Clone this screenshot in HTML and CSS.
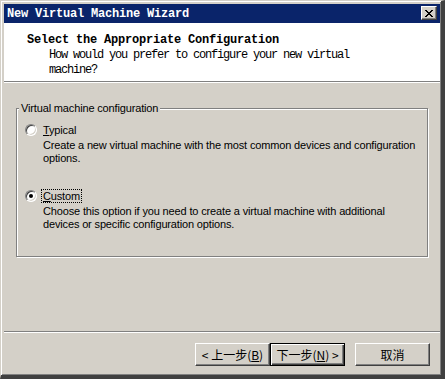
FILE: index.html
```html
<!DOCTYPE html>
<html lang="en">
<head>
  <meta charset="UTF-8">
  <title>New Virtual Machine Wizard</title>
  <link rel="stylesheet" href="styles.css">
</head>
<body>
  <div class="window">
    <div class="titlebar">
      <span class="title">New Virtual Machine Wizard</span>
      <button class="close">
        <svg width="8" height="7" viewBox="0 0 8 7" shape-rendering="crispEdges">
          <path fill="#000" d="M0 0h2v1H0z M6 0h2v1H6z M1 1h2v1H1z M5 1h2v1H5z M2 2h4v1H2z M3 3h2v1H3z M2 4h4v1H2z M1 5h2v1H1z M5 5h2v1H5z M0 6h2v1H0z M6 6h2v1H6z"/>
        </svg>
      </button>
    </div>

    <div class="header">
      <div class="head-title">Select the Appropriate Configuration</div>
      <div class="head-sub">How would you prefer to configure your new virtual machine?</div>
    </div>

    <div class="content">
      <div class="group">
        <div class="legend">Virtual machine configuration</div>

        <!-- Typical -->
        <div class="option">
          <div class="option-row">
            <span class="radio"></span>
            <span class="label"><u>T</u>ypical</span>
          </div>
          <div class="desc">Create a new virtual machine with the most common devices and configuration options.</div>
        </div>

        <!-- Custom -->
        <div class="option second">
          <div class="option-row">
            <span class="radio checked"></span>
            <span class="label focus"><u>C</u>ustom</span>
          </div>
          <div class="desc">Choose this option if you need to create a virtual machine with additional devices or specific configuration options.</div>
        </div>
      </div>
    </div>

    <div class="footer">
      <button class="btn">&lt; 上一步(<u>B</u>)</button>
      <button class="btn default">下一步(<u>N</u>) &gt;</button>
      <button class="btn cancel">取消</button>
    </div>
  </div>
</body>
</html>
```

FILE: styles.css
```css
body {
  margin: 0;
  font-family: "Liberation Sans", Arial, sans-serif;
  font-size: 11px;
  color: #000;
}

.window {
  width: 445px;
  height: 379px;
  box-sizing: border-box;
  background: #d4d0c8;
  border-style: solid;
  border-width: 1px 4px 4px 1px;
  border-color: #d4d0c8 #404040 #404040 #d4d0c8;
  box-shadow: inset 1px 1px #fff, inset -1px -1px #808080;
  padding: 3px 1px 1px 3px;
  display: flex;
  flex-direction: column;
}

/* title bar */
.titlebar {
  height: 19px;
  flex-shrink: 0;
  background: #0a246a;
  display: flex;
  align-items: center;
  justify-content: space-between;
  padding: 0 3px;
}

.title {
  color: #fff;
  font: bold 12px "Liberation Mono", monospace;
  letter-spacing: -0.2px;
}

.close {
  width: 16px;
  height: 14px;
  box-sizing: border-box;
  padding: 0;
  margin-top: -1px;
  background: #d4d0c8;
  border: 1px solid;
  border-color: #fff #404040 #404040 #fff;
  box-shadow: inset -1px -1px #808080;
  display: flex;
  align-items: center;
  justify-content: center;
}

.close svg {
  display: block;
}

/* white header */
.header {
  height: 59px;
  flex-shrink: 0;
  box-sizing: border-box;
  background: #fff;
  border-bottom: 1px solid #808080;
  box-shadow: 0 1px #fff;
  padding: 10px 0 0 23px;
}

.head-title {
  font: bold 12px/15px "Liberation Mono", monospace;
  letter-spacing: -0.2px;
}

.head-sub {
  font: 12px/15px "Liberation Mono", monospace;
  letter-spacing: -1.2px;
  padding-left: 22px;
  width: 310px;
}

/* group box */
.content {
  flex: 1;
  padding: 26px 0 0 12px;
}

.group {
  position: relative;
  width: 412px;
  box-sizing: border-box;
  border: 1px solid #808080;
  box-shadow: 1px 1px #fff, inset 1px 1px #fff;
  padding: 14px 8px 25px 8px;
  letter-spacing: -0.15px;
}

.legend {
  position: absolute;
  left: 2px;
  top: -7px;
  line-height: 13px;
  padding: 0 2px;
  background: #d4d0c8;
}

.option.second {
  margin-top: 24px;
}

.option-row {
  display: flex;
  align-items: center;
  height: 14px;
}

.radio {
  position: relative;
  width: 12px;
  height: 12px;
  box-sizing: border-box;
  border-radius: 50%;
  background: #fff;
  border: 1px solid;
  border-color: #808080 #fff #fff #808080;
  box-shadow: inset 1px 1px #404040, inset -1px -1px #d4d0c8;
}

.radio.checked::after {
  content: "";
  position: absolute;
  left: 3px;
  top: 3px;
  width: 4px;
  height: 4px;
  border-radius: 50%;
  background: #000;
}

.label {
  margin-left: 4px;
  line-height: 12px;
  padding: 0 1px;
  border: 1px solid transparent;
}

.label.focus {
  border: 1px dotted #000;
}

.desc {
  margin: 2px 0 0 18px;
  line-height: 13px;
}

/* buttons */
.footer {
  flex-shrink: 0;
  border-top: 1px solid #808080;
  box-shadow: inset 0 1px #fff;
  padding: 11px 10px 8px;
  display: flex;
  justify-content: flex-end;
}

.btn {
  width: 75px;
  height: 23px;
  box-sizing: border-box;
  padding: 0;
  background: #d4d0c8;
  color: #000;
  border: 1px solid;
  border-color: #fff #404040 #404040 #fff;
  box-shadow: inset -1px -1px #808080;
  font: 12px "Noto Sans CJK SC", sans-serif;
}

.btn.default {
  border-color: #000;
  box-shadow: inset 1px 1px #fff, inset -1px -1px #404040, inset -2px -2px #808080;
}

.btn.cancel {
  margin-left: 10px;
}
```
